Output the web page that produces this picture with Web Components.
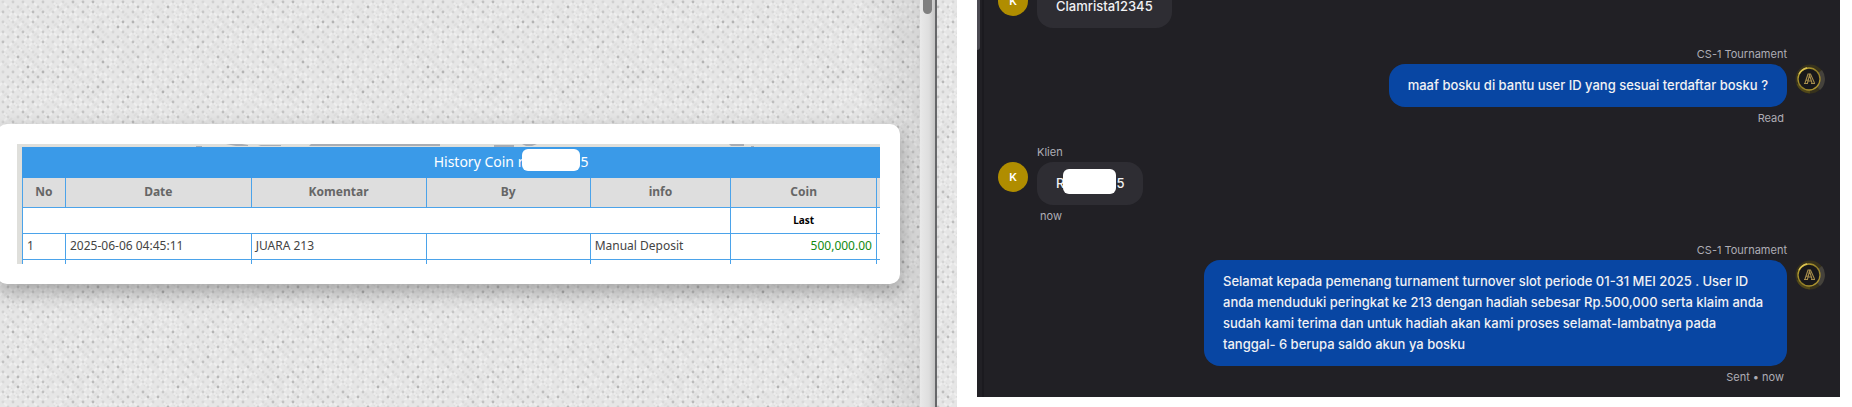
<!DOCTYPE html>
<html lang="id">
<head>
<meta charset="utf-8">
<meta name="viewport" content="width=device-width, initial-scale=1">
<title>Klaim Turnament</title>
<style>
  body {
    margin: 0;
    background: #fff;
  }
</style>
</head>
<body>
<claim-page>
  <paper-panel slot="left">
    <coin-card></coin-card>
  </paper-panel>
  <chat-panel slot="right">
    <chat-message>Clamrista12345</chat-message>
    <chat-message from="agent" name="CS-1 Tournament" status="Read">maaf bosku di bantu user ID yang sesuai terdaftar bosku ?</chat-message>
    <chat-message name="Klien" status="now">R<hidden-text></hidden-text>5</chat-message>
    <chat-message from="agent" name="CS-1 Tournament" status="Sent • now">Selamat kepada pemenang turnament turnover slot periode 01-31 MEI 2025 . User ID anda menduduki peringkat ke 213 dengan hadiah sebesar Rp.500,000 serta klaim anda sudah kami terima dan untuk hadiah akan kami proses selamat-lambatnya pada tanggal- 6 berupa saldo akun ya bosku</chat-message>
  </chat-panel>
</claim-page>

<script>
// Kerangka halaman: bukti di kiri, chat di kanan
class ClaimPage extends HTMLElement {
   constructor() {
      super();
      this.attachShadow({ mode: 'open' });
      this.shadowRoot.innerHTML = `
      <style>
        :host {
          display: grid;
          box-sizing: border-box;
          grid-template-columns: minmax(0, 957fr) minmax(0, 863fr);
          column-gap: 20px;
          height: 100vh;
          padding-right: 12px;
        }
      </style>
      <slot name="left"></slot>
      <slot name="right"></slot>
    `;
   }
}

// Panel dengan tekstur kertas dan scrollbar
class PaperPanel extends HTMLElement {
   constructor() {
      super();
      this.attachShadow({ mode: 'open' });
      this.render();
   }

   // titik-titik anyaman, acak tapi selalu sama
   weave() {
      let seed = 11;
      const random = () => {
         seed = (seed * 16807) % 2147483647;
         return seed / 2147483647;
      };

      let dots = '';
      for (let row = 0; row < 40; row++) {
         for (let col = 0; col < 20; col++) {
            const x = col * 10 + (row % 2) * 5 + 3;
            const y = row * 5 + 2;
            const dark = (0.06 + random() * random() * 0.18).toFixed(2);
            dots += `<circle cx="${x}" cy="${y}" r="1.4" fill="#000" opacity="${dark}"/>`;
            if (random() > 0.5) {
               dots += `<path d="M${x - 4} ${y + 4}l3 -3" stroke="#fff" stroke-width="2" opacity=".35"/>`;
            }
            if (random() > 0.5) {
               dots += `<path d="M${x + 1} ${y + 4}l3 -3" stroke="#999" stroke-width="2" opacity=".1"/>`;
            }
            if (random() > 0.5) {
               dots += `<path d="M${x + 1} ${y + 1}l3 3" stroke="#fff" stroke-width="2" opacity=".35"/>`;
            }
         }
      }
      return dots;
   }

   render() {
      this.shadowRoot.innerHTML = `
      <style>
        :host {
          position: relative;
          display: grid;
          grid-template-columns: minmax(0, 1fr) 17px 20px;
          overflow: hidden;
          background: #e6e6e6;
        }

        .paper {
          position: absolute;
          inset: 0;
          width: 100%;
          height: 100%;
        }

        .content {
          position: relative;
          display: flex;
          flex-direction: column;
          justify-content: center;
          padding-right: 20px;
          background: linear-gradient(to left, rgba(0, 0, 0, 0.07), transparent 60px);
        }

        .scrollbar {
          position: relative;
          box-sizing: border-box;
          padding-left: 3px;
          border-right: 2px solid #666769;
          background: linear-gradient(to right, #e9e9e9, #dedede 60%, #c4c4c4);
        }

        .thumb {
          width: 9px;
          height: 14px;
          border-radius: 0 0 5px 5px;
          background: #808080;
        }
      </style>

      <svg class="paper" aria-hidden="true">
        <defs>
          <pattern id="weave" width="200" height="200" patternUnits="userSpaceOnUse">${this.weave()}</pattern>
        </defs>
        <rect width="100%" height="100%" fill="url(#weave)"/>
      </svg>
      <div class="content"><slot></slot></div>
      <div class="scrollbar"><div class="thumb"></div></div>
    `;
   }
}

// Kartu berisi tabel history coin
class CoinCard extends HTMLElement {
   constructor() {
      super();
      this.attachShadow({ mode: 'open' });
      this.render();
   }

   render() {
      this.shadowRoot.innerHTML = `
      <style>
        :host {
          display: block;
          margin-left: -3px;
          padding: 20px;
          border-radius: 10px;
          background: #fff;
          box-shadow: 0 8px 20px rgba(0, 0, 0, 0.3);
          font-family: "Noto Sans", "Open Sans", sans-serif;
        }

        .shot {
          box-sizing: border-box;
          height: 120px;
          padding: 3px 0 0 5px;
          overflow: hidden;
          background: #dfdfdb;
        }

        .smudge {
          display: block;
          width: 100%;
          height: 3px;
          margin: -3px 0 0;
        }

        table {
          width: 114%;
          table-layout: fixed;
          border-collapse: collapse;
          background: #fff;
          color: #444;
          font-size: 12px;
          line-height: 16px;
        }

        th, td {
          box-sizing: border-box;
          height: 26px;
          padding: 0 4px;
          border: 1px solid #4ba3ea;
          text-align: left;
        }

        .title th {
          height: 30px;
          background: #3a9ae8;
          border-color: #3a9ae8;
          color: #fff;
          font-size: 14px;
          font-weight: 400;
          text-align: center;
        }

        .head th {
          height: 30px;
          background: #dedede;
          color: #666;
          text-align: center;
        }

        .sub th {
          color: #000;
          font-size: 10px;
          text-align: center;
        }

        .amount {
          color: #118a11;
          text-align: right;
        }

        hidden-text {
          --width: 58px;
          --height: 22px;
        }
      </style>

      <div class="shot">
        <svg class="smudge" viewBox="0 0 858 3" preserveAspectRatio="none" fill="#a9adb3" aria-hidden="true">
          <path d="M174 2h6v1h-6zM204 0h16l6 1v1h-12zM236 1h23v1h-20zM289 0h129v2h-131zM472 1h20v2h-20zM500 0h15l-5 2h-6zM707 0h15v2h-13zM729 2h3v1h-3z"/>
        </svg>
        <table>
          <colgroup>
            <col style="width: 4.4%">
            <col style="width: 19%">
            <col style="width: 17.9%">
            <col style="width: 16.8%">
            <col style="width: 14.4%">
            <col style="width: 14.9%">
            <col>
          </colgroup>
          <thead>
            <tr class="title"><th colspan="7">History Coin r<hidden-text></hidden-text>5</th></tr>
            <tr class="head"><th>No</th><th>Date</th><th>Komentar</th><th>By</th><th>info</th><th>Coin</th><th></th></tr>
            <tr class="sub"><th colspan="5"></th><th>Last</th><th></th></tr>
          </thead>
          <tbody>
            <tr><td>1</td><td>2025-06-06 04:45:11</td><td>JUARA 213</td><td></td><td>Manual Deposit</td><td class="amount">500,000.00</td><td></td></tr>
            <tr><td></td><td></td><td></td><td></td><td></td><td></td><td></td></tr>
          </tbody>
        </table>
      </div>
    `;
   }
}

// Kotak putih penutup sebagian user ID
class HiddenText extends HTMLElement {
   constructor() {
      super();
      this.attachShadow({ mode: 'open' });
      this.shadowRoot.innerHTML = `
      <style>
        :host {
          position: relative;
          display: inline-block;
          width: var(--width, 53px);
          height: var(--height, 25px);
          margin: -8px 0 -2px -1px;
          border-radius: 6px;
          background: #fff;
          vertical-align: middle;
        }
      </style>
    `;
   }
}

class ChatPanel extends HTMLElement {
   constructor() {
      super();
      this.attachShadow({ mode: 'open' });
      this.shadowRoot.innerHTML = `
      <style>
        :host {
          display: grid;
          grid-template-columns: 7px minmax(0, 1fr);
          min-height: 0;
          margin-bottom: 10px;
          overflow: hidden;
          background: #212025;
          font-family: Inter, sans-serif;
        }

        .rail {
          border-right: 2px solid #1b1a1f;
        }

        .thumb {
          width: 3px;
          height: 50px;
          border-radius: 0 0 3px 0;
          background: #4b4a52;
        }

        .messages {
          display: flex;
          flex-direction: column;
          justify-content: flex-end;
          gap: 13px;
          min-height: 0;
          padding: 0 15px 9px 14px;
        }
      </style>

      <div class="rail"><div class="thumb"></div></div>
      <div class="messages"><slot></slot></div>
    `;
   }
}

class ChatMessage extends HTMLElement {
   constructor() {
      super();
      this.attachShadow({ mode: 'open' });
   }

   connectedCallback() {
      this.render();
   }

   render() {
      const isAgent = this.getAttribute('from') === 'agent';
      const name = this.getAttribute('name');
      const status = this.getAttribute('status');

      this.shadowRoot.innerHTML = `
      <style>
        :host {
          display: flex;
          flex-shrink: 0;
          align-items: flex-start;
          gap: 9px;
        }

        :host([from="agent"]) {
          flex-direction: row-reverse;
          gap: 8px;
        }

        :host(:not([status])) {
          padding-bottom: 3px;
        }

        .column {
          display: flex;
          flex-direction: column;
          align-items: flex-start;
          max-width: calc(100% - 244px);
        }

        :host([from="agent"]) .column {
          align-items: flex-end;
        }

        .name, .status {
          color: #aeadb5;
          font-size: 11px;
          line-height: 20px;
        }

        .status {
          padding: 0 3px;
          line-height: 22px;
        }

        .bubble {
          padding: 11px 19px;
          border-radius: 16px;
          background: #2e2d33;
          color: #f1f1f4;
          font-size: 13px;
          font-weight: 500;
          line-height: 21px;
        }

        :host([from="agent"]) .bubble {
          background: #0846a3;
        }

        .avatar {
          flex: none;
          width: 30px;
          height: 30px;
          margin-top: 1px;
          border-radius: 50%;
          background: #b08d00;
          color: #fff;
          font-size: 11px;
          font-weight: 600;
          line-height: 30px;
          text-align: center;
        }

        :host([name]) .avatar {
          margin-top: 20px;
        }

        svg {
          display: block;
        }
      </style>

      <div class="avatar">${isAgent ? this.logo() : 'K'}</div>
      <div class="column">
        ${name ? `<div class="name">${name}</div>` : ''}
        <div class="bubble"><slot></slot></div>
        ${status ? `<div class="status">${status}</div>` : ''}
      </div>
    `;
   }

   logo() {
      return `
      <svg width="30" height="30" viewBox="0 0 30 30" aria-hidden="true">
        <defs>
          <linearGradient id="gold" x1="0" y1="0" x2="1" y2="1">
            <stop offset="0" stop-color="#c9b035"/>
            <stop offset=".5" stop-color="#8f7c26"/>
            <stop offset="1" stop-color="#b89d34"/>
          </linearGradient>
        </defs>
        <rect width="30" height="30" fill="#212025"/>
        <circle cx="15" cy="15" r="14.5" fill="#37321c"/>
        <path d="M15 15L27 6A15 15 0 0 1 25 26z" fill="#45423c"/>
        <path d="M3 20Q6 27 15 28" fill="none" stroke="#514819" stroke-width="3"/>
        <circle cx="14" cy="15" r="11" fill="#18181a" stroke="url(#gold)" stroke-width="1.3"/>
        <path d="M4 10A11.500 11.500 0 0 1 12 4" fill="none" stroke="#dcc453" stroke-width="1.3"/>
        <path d="M10 19l3-9h2.500l4 9M12.500 19l2-8 2.500 8M11 16l5 1M9 19.500h4M16 19.500h4" fill="none" stroke="#a68d4c" stroke-width="1.100"/>
      </svg>`;
   }
}

customElements.define('hidden-text', HiddenText);
customElements.define('claim-page', ClaimPage);
customElements.define('paper-panel', PaperPanel);
customElements.define('coin-card', CoinCard);
customElements.define('chat-panel', ChatPanel);
customElements.define('chat-message', ChatMessage);
</script>
</body>
</html>
